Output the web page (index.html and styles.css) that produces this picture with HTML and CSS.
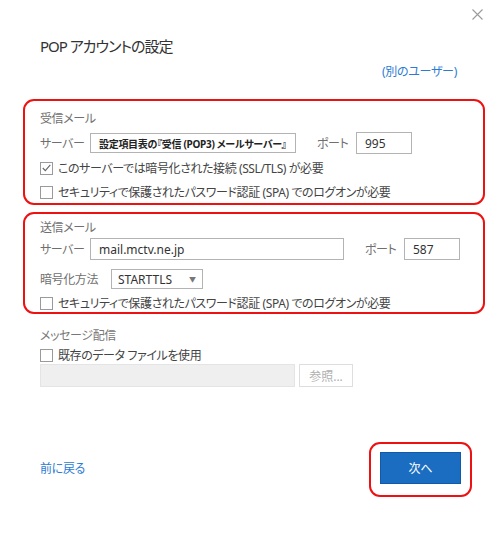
FILE: index.html
```html
<!DOCTYPE html>
<html lang="ja">
<head>
    <meta charset="UTF-8">
    <meta name="viewport" content="width=device-width, initial-scale=1.0">
    <title>POP アカウントの設定</title>
    <link rel="stylesheet" href="styles.css">
</head>
<body>
    <div class="dialog">
        <div class="topbar">
            <svg class="close" width="11" height="11" viewBox="0 0 11 11">
                <path d="M0.5 0.5 L10.5 10.5 M10.5 0.5 L0.5 10.5" stroke="#9a9a9a" stroke-width="1.1" fill="none"/>
            </svg>
        </div>

        <h1 class="title">POP アカウントの設定</h1>
        <div class="other-user"><a href="#">(別のユーザー)</a></div>

        <!-- 受信メール -->
        <section class="group group-in">
            <div class="legend">受信メール</div>
            <div class="row server-row">
                <span class="label label-server">サーバー</span>
                <div class="field field-server1"><span class="note">設定項目表の『受信 (POP3) メールサーバー』</span></div>
                <span class="label label-port1">ポート</span>
                <div class="field field-port">995</div>
            </div>
            <label class="check check-first">
                <span class="box checked">
                    <svg width="9" height="8" viewBox="0 0 9 8"><path d="M0.8 4 L3.3 6.6 L8.3 0.8" stroke="#666" stroke-width="1.1" fill="none"/></svg>
                </span>
                このサーバーでは暗号化された接続 (SSL/TLS) が必要
            </label>
            <label class="check check-second">
                <span class="box"></span>
                セキュリティで保護されたパスワード認証 (SPA) でのログオンが必要
            </label>
        </section>

        <!-- 送信メール -->
        <section class="group group-out">
            <div class="legend">送信メール</div>
            <div class="row server-row2">
                <span class="label label-server">サーバー</span>
                <div class="field field-server2">mail.mctv.ne.jp</div>
                <span class="label label-port2">ポート</span>
                <div class="field field-port">587</div>
            </div>
            <div class="row enc-row">
                <span class="label label-enc">暗号化方法</span>
                <div class="select">STARTTLS<span class="caret">&#9660;</span></div>
            </div>
            <label class="check check-out">
                <span class="box"></span>
                セキュリティで保護されたパスワード認証 (SPA) でのログオンが必要
            </label>
        </section>

        <!-- メッセージ配信 -->
        <section class="plain">
            <div class="legend legend-plain">メッセージ配信</div>
            <label class="check check-plain">
                <span class="box"></span>
                既存のデータ ファイルを使用
            </label>
            <div class="row file-row">
                <div class="field-disabled"></div>
                <div class="btn-browse">参照...</div>
            </div>
        </section>

        <footer class="footer">
            <a href="#" class="back">前に戻る</a>
            <div class="next-mark">
                <button class="btn-next">次へ</button>
            </div>
        </footer>
    </div>
</body>
</html>
```

FILE: styles.css
```css
* {
    box-sizing: border-box;
}
body {
    margin: 0;
    background-color: #fff;
    color: #333;
    font-family: 'Noto Sans', 'Noto Sans CJK JP', sans-serif;
    font-feature-settings: "palt";
    font-size: 12px;
}
.dialog {
    width: 500px;
    height: 534px;
    padding: 0 15px 0 23px;
}
.topbar {
    height: 26px;
    display: flex;
    justify-content: flex-end;
    align-items: center;
    padding-right: 2px;
    padding-top: 2px;
}
.title {
    margin: 10px 0 0 17px;
    height: 20px;
    line-height: 20px;
    font-size: 15px;
    font-weight: normal;
    letter-spacing: -1px;
    color: #333;
}
.other-user {
    height: 18px;
    line-height: 18px;
    margin-top: 7px;
    text-align: right;
    padding-right: 28px;
}
.other-user a, .back {
    color: #2b7bd4;
    text-decoration: none;
    font-size: 12px;
    letter-spacing: -0.3px;
}
.group {
    border: 2px solid #ee1111;
    border-radius: 11px;
    padding: 0 15px;
}
.group-in {
    margin-top: 18px;
    padding-top: 9px;
    padding-bottom: 2px;
}
.group-out {
    margin-top: 7px;
    padding-top: 5px;
}
.legend {
    height: 18px;
    line-height: 18px;
    color: #6f6f6f;
    font-size: 12px;
    letter-spacing: -0.4px;
}
.row {
    display: flex;
    align-items: center;
}
.label {
    color: #6f6f6f;
    font-size: 12px;
    letter-spacing: -0.4px;
}
.label-server {
    width: 50px;
}
.label-port1 {
    margin-left: 21px;
    width: 39px;
}
.label-port2 {
    margin-left: 21px;
    width: 39px;
}
.label-enc {
    width: 71px;
}
.server-row {
    height: 26px;
    margin-top: 2px;
}
.server-row2 {
    height: 26px;
    margin-top: -1px;
}
.field {
    height: 22px;
    border: 1px solid #b3b3b3;
    background-color: #fff;
    padding: 0 8px;
    display: flex;
    align-items: center;
    font-size: 12px;
    color: #333;
}
.field-server1 {
    width: 206px;
    height: 20px;
    padding: 0 8px;
}
.field-server2 {
    width: 254px;
}
.field-port {
    width: 56px;
}
.note {
    font-size: 10px;
    font-weight: bold;
    color: #222;
    white-space: nowrap;
    letter-spacing: -0.3px;
}
.enc-row {
    height: 22px;
    margin-top: 6px;
}
.select {
    width: 92px;
    height: 20px;
    border: 1px solid #b3b3b3;
    padding: 0 6px;
    display: flex;
    align-items: center;
    justify-content: space-between;
    font-size: 12px;
    color: #333;
}
.caret {
    font-size: 7px;
    color: #777;
}
.check {
    display: flex;
    align-items: center;
    height: 18px;
    color: #444;
    font-size: 12px;
    letter-spacing: -0.4px;
    white-space: nowrap;
}
.check-first {
    margin-top: 3px;
}
.check-second {
    margin-top: 6px;
}
.check-out {
    margin-top: 4px;
}
.box {
    width: 13px;
    height: 13px;
    border: 1px solid #9a9a9a;
    margin-right: 5px;
    display: flex;
    align-items: center;
    justify-content: center;
    flex-shrink: 0;
}
.plain {
    padding-left: 17px;
    margin-top: 13px;
}
.legend-plain {
    color: #777;
}
.check-plain {
    margin-top: 1px;
}
.file-row {
    margin-top: 0;
    height: 23px;
}
.field-disabled {
    width: 255px;
    height: 23px;
    background-color: #efefef;
    border: 1px solid #e4e4e4;
}
.btn-browse {
    margin-left: 4px;
    width: 54px;
    height: 23px;
    border: 1px solid #dedede;
    color: #b0b0b0;
    display: flex;
    align-items: center;
    justify-content: center;
    font-size: 12px;
}
.footer {
    margin-top: 55px;
    display: flex;
    justify-content: space-between;
    align-items: center;
    padding-left: 17px;
    padding-right: 13px;
}
.back {
    margin-top: -4px;
}
.next-mark {
    border: 2px solid #ee1111;
    border-radius: 11px;
    padding: 8px 9px 11px 9px;
}
.btn-next {
    width: 81px;
    height: 32px;
    background-color: #1a6dc0;
    border: 1px solid #1259a8;
    color: #fff;
    font-family: inherit;
    font-size: 12px;
    font-feature-settings: "palt";
    padding: 0;
}
```
